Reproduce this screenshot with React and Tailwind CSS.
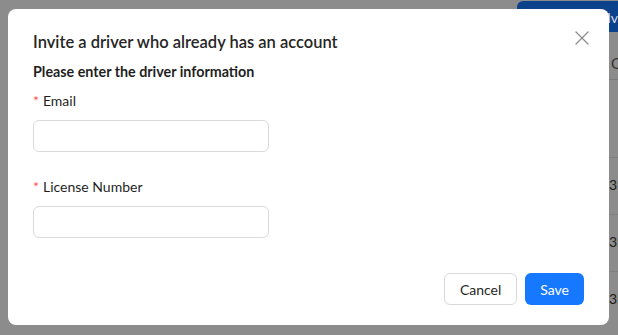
import { X } from "lucide-react";

function Field({ label }) {
  return (
    <div className="flex flex-col">
      <label className="flex items-center h-[22px] text-[14px] text-[#1f1f1f]">
        <span className="text-[#ff4d4f] mr-[4px] text-[14px]">*</span>
        {label}
      </label>
      <input
        className="mt-[9px] w-[236px] h-[32px] rounded-[6px] border border-[#d9d9d9] bg-white outline-none"
        type="text"
      />
    </div>
  );
}

export default function App() {
  return (
    <div
      className="relative w-[618px] h-[335px] overflow-hidden bg-[#8c8c8c]"
      style={{ fontFamily: '"Lato", "Open Sans", sans-serif' }}
    >
      {/* page behind the mask */}
      <div className="absolute left-[517px] top-[1px] w-[120px] h-[31px] rounded-[6px] bg-[#0c418c] text-[14px] text-white/80 pl-[90px] pt-[6px]">
        Iv
      </div>
      <div className="absolute left-[609px] top-[48px] w-[40px] h-[32px] border-b border-[#7c7c7c] text-[#333] pl-[2px] pt-[4px] text-[15px]">
        Q
      </div>
      <div className="absolute left-[609px] top-[157px] w-[20px] flex flex-col">
        {[0, 1, 2].map((i) => (
          <div
            key={i}
            className="h-[57px] border-t border-[#7f7f7f] text-[14px] text-[#1a1a1a] pt-[16px]"
          >
            3:
          </div>
        ))}
      </div>

      {/* modal */}
      <div className="absolute left-[8px] top-[9px] w-[601px] h-[316px] bg-white rounded-[8px] px-[25px] pt-[20px] pb-[20px] flex flex-col">
        <button className="absolute right-[15px] top-[17px] text-[#8c8c8c]">
          <X size={24} strokeWidth={1.3} />
        </button>
        <h2 className="text-[16.5px] font-semibold text-[#262626] leading-[24px] mt-[1px]">
          Invite a driver who already has an account
        </h2>
        <p className="mt-[7px] text-[14.3px] font-bold text-[#1f1f1f] leading-[22px]">
          Please enter the driver information
        </p>
        <div className="mt-[6px] flex flex-col gap-[23px]">
          <Field label="Email" />
          <Field label="License Number" />
        </div>
        <div className="mt-auto flex justify-end gap-[8px] pr-[0px]">
          <button className="h-[32px] px-[15px] rounded-[6px] border border-[#d9d9d9] text-[14px] text-[#262626] bg-white">
            Cancel
          </button>
          <button className="h-[32px] px-[15px] rounded-[6px] bg-[#1677ff] text-[14px] text-white">
            Save
          </button>
        </div>
      </div>
    </div>
  );
}
